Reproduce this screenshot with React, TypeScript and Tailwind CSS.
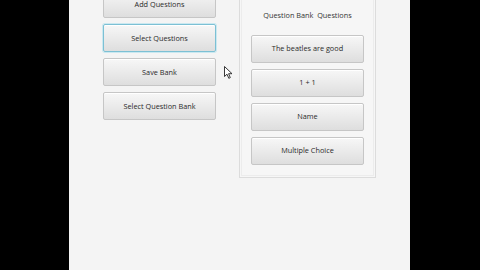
const leftItems = ['Add Questions', 'Select Questions', 'Save Bank', 'Select Question Bank'];
const bankItems = ['The beatles are good', '1 + 1', 'Name', 'Multiple Choice'];

function FxButton({ label, focused }: { label: string; focused?: boolean }) {
  return (
    <div
      className={
        'flex h-[28px] w-[113px] items-center justify-center rounded-[2px] border bg-gradient-to-b from-[#f7f7f7] to-[#dedede] text-[7.3px] text-[#2a2a2a] shadow-[inset_0_1px_0_#ffffff] ' +
        (focused ? 'border-[#7cc0d4] ring-1 ring-[#cbe8f0]' : 'border-[#c6c6c6]')
      }
    >
      {label}
    </div>
  );
}

export default function App() {
  return (
    <div className="flex h-[270px] w-[480px] bg-black" style={{ fontFamily: '"Open Sans", "Noto Sans", sans-serif' }}>
      <div className="ml-[69px] h-full w-[341px] bg-[#f4f4f4] relative">
        <div className="flex items-start">
          {/* left column */}
          <div className="ml-[34px] mt-[-10px] flex flex-col gap-[6px]">
            {leftItems.map((l) => (
              <FxButton key={l} label={l} focused={l === 'Select Questions'} />
            ))}
          </div>

          {/* bank panel */}
          <div className="ml-[23px] mt-[-4px] h-[182px] w-[137px] border border-[#dcdcdc] bg-[#f6f6f6] p-[1px]">
            <div className="flex h-full flex-col items-center border border-[#ececec] pt-[11px]">
              <div className="text-[7.3px] text-[#333]">Question Bank&nbsp; Questions</div>
              <div className="mt-[14px] flex flex-col gap-[6px]">
                {bankItems.map((l) => (
                  <FxButton key={l} label={l} />
                ))}
              </div>
            </div>
          </div>
        </div>

        {/* mouse cursor */}
        <svg className="absolute left-[155px] top-[66px]" width="9" height="13" viewBox="0 0 9 13">
          <path d="M0.5 0.5 L0.5 10.5 L3 8.2 L4.8 12.3 L6.3 11.6 L4.6 7.7 L8 7.7 Z" fill="#fff" stroke="#222" strokeWidth="0.9" strokeLinejoin="round" />
        </svg>
      </div>
    </div>
  );
}
